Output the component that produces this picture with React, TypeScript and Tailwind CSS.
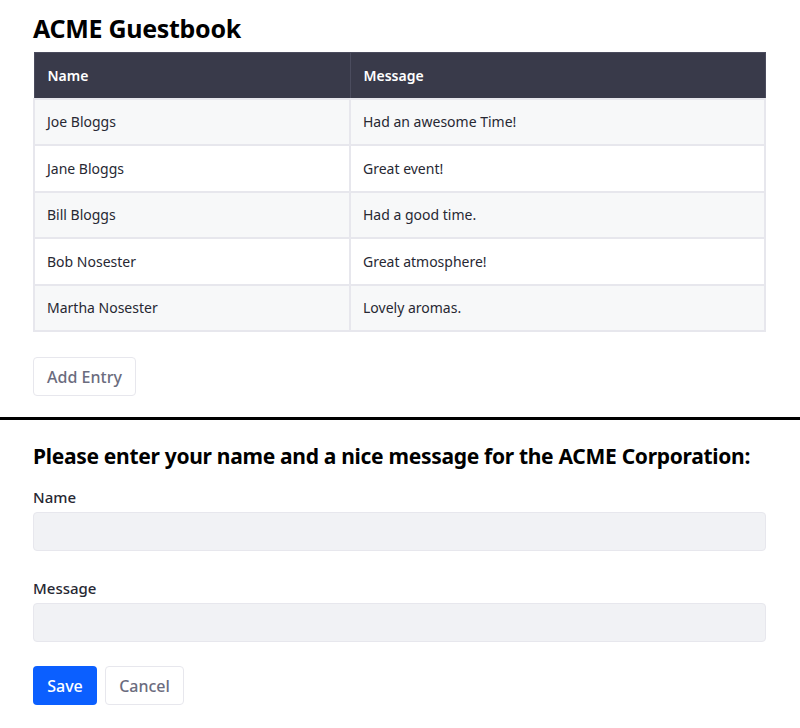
import { useState } from "react";

interface Entry {
  name: string;
  message: string;
}

const entries: Entry[] = [
  { name: "Joe Bloggs", message: "Had an awesome Time!" },
  { name: "Jane Bloggs", message: "Great event!" },
  { name: "Bill Bloggs", message: "Had a good time." },
  { name: "Bob Nosester", message: "Great atmosphere!" },
  { name: "Martha Nosester", message: "Lovely aromas." },
];

const App = () => {
  const [name, setName] = useState("");
  const [message, setMessage] = useState("");

  return (
    <div className="min-h-[728px] bg-white font-['Noto_Sans',sans-serif] text-[#272833]">
      <div className="px-[33px] pt-[11px]">
        <h1 className="text-[25px] font-bold leading-[34px] text-black tracking-[-0.3px]">
          ACME Guestbook
        </h1>
        <table className="mt-[7px] w-[733px] border-collapse border border-[#e7e7ed] text-[14px]">
          <thead>
            <tr className="h-[46px] bg-[#393a4a] text-white">
              <th className="w-[316px] border border-[#4b4c5e] px-[13px] text-left font-semibold">
                Name
              </th>
              <th className="border border-[#4b4c5e] px-[13px] text-left font-semibold">
                Message
              </th>
            </tr>
          </thead>
          <tbody>
            {entries.map((entry, index) => (
              <tr
                key={index}
                className={`h-[46.5px] ${index % 2 === 0 ? "bg-[#f7f8f9]" : "bg-white"}`}
              >
                <td className="border-2 border-[#e7e7ed] px-[12px]">{entry.name}</td>
                <td className="border-2 border-[#e7e7ed] px-[12px]">{entry.message}</td>
              </tr>
            ))}
          </tbody>
        </table>
        <button className="mt-[25px] block h-[39px] w-[103px] rounded-[4px] border border-[#e7e7ed] bg-white text-[16px] font-medium text-[#6b6c7e]">
          Add Entry
        </button>
      </div>

      <div className="mt-[21px] h-[3px] bg-black" />

      <div className="px-[33px] pt-[22px]">
        <h2 className="text-[21px] font-bold leading-[28px] text-black tracking-[-0.3px]">
          Please enter your name and a nice message for the ACME Corporation:
        </h2>
        <div className="mt-[17px] flex flex-col gap-[5px]">
          <label className="text-[15px] font-medium leading-[20px]">Name</label>
          <input
            value={name}
            onChange={(e) => setName(e.target.value)}
            className="h-[39px] w-[733px] rounded-[4px] border border-[#e7e7ed] bg-[#f1f2f5] px-3 outline-none"
          />
        </div>
        <div className="mt-[27px] flex flex-col gap-[5px]">
          <label className="text-[15px] font-medium leading-[20px]">Message</label>
          <input
            value={message}
            onChange={(e) => setMessage(e.target.value)}
            className="h-[39px] w-[733px] rounded-[4px] border border-[#e7e7ed] bg-[#f1f2f5] px-3 outline-none"
          />
        </div>
        <div className="mt-[24px] flex gap-[8px]">
          <button className="h-[39px] w-[64px] rounded-[4px] bg-[#0b5fff] text-[16px] font-medium text-white">
            Save
          </button>
          <button className="h-[39px] w-[79px] rounded-[4px] border border-[#e7e7ed] bg-white text-[16px] font-medium text-[#6b6c7e]">
            Cancel
          </button>
        </div>
      </div>
    </div>
  );
};

export default App;
